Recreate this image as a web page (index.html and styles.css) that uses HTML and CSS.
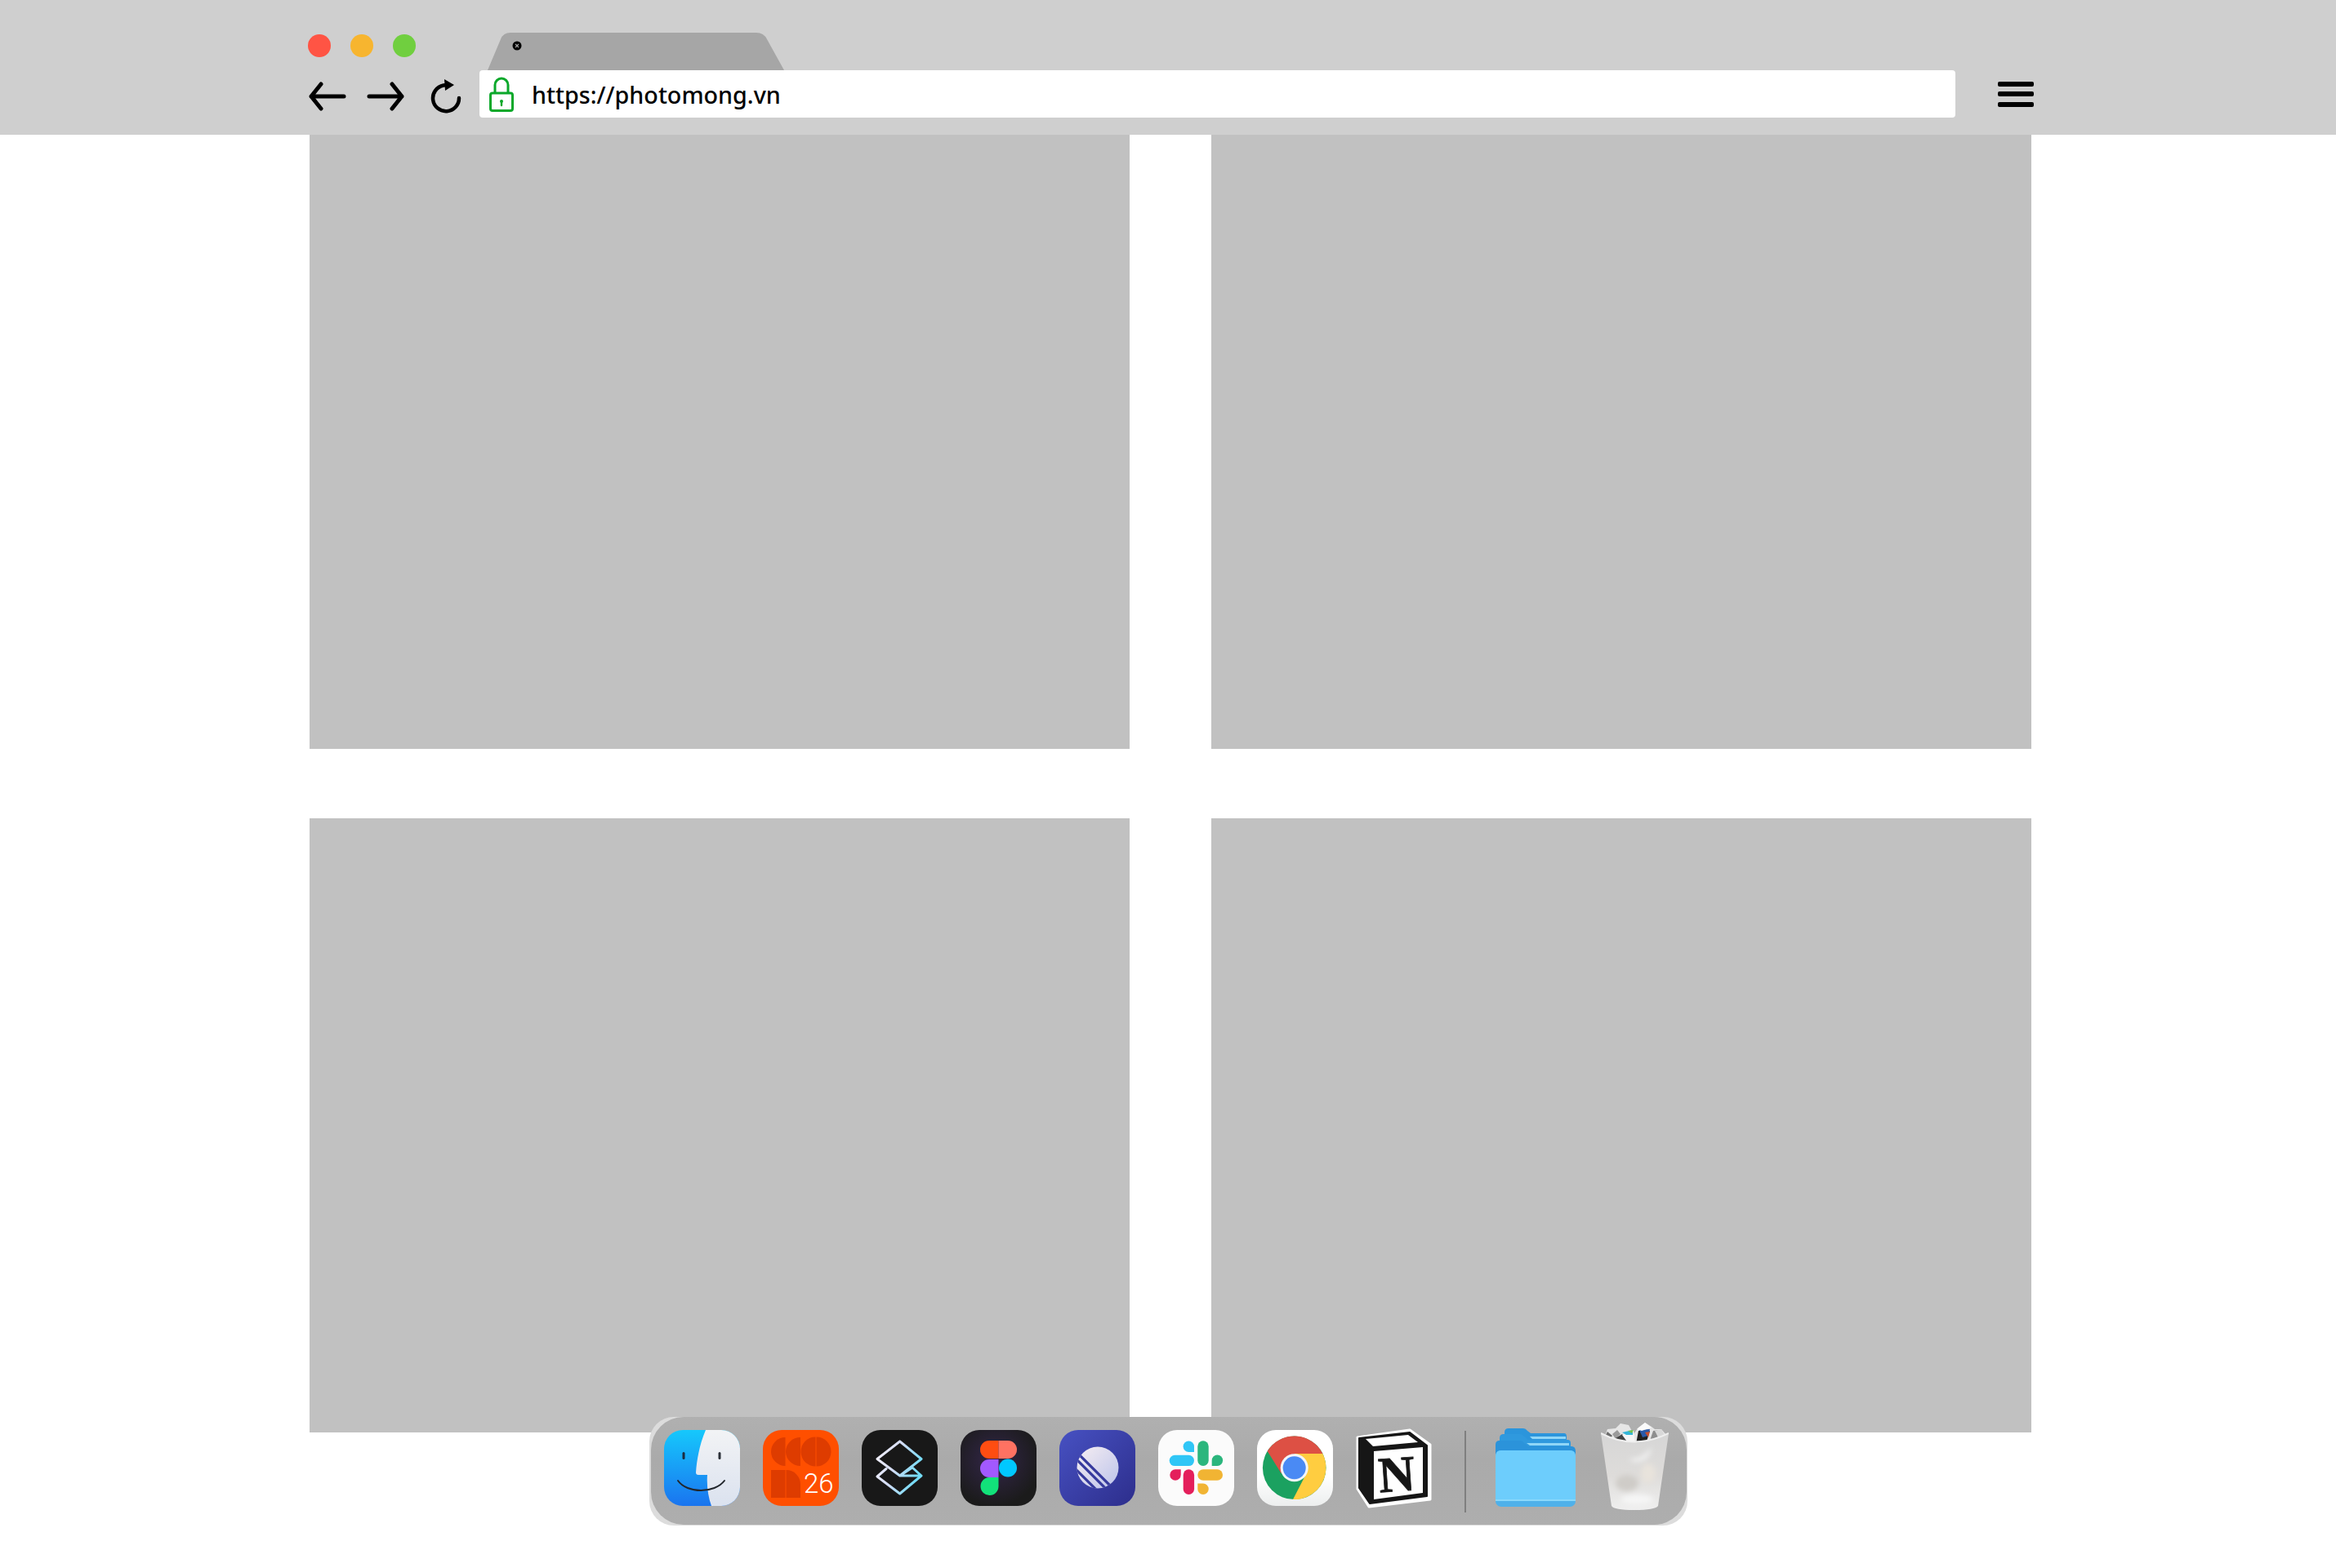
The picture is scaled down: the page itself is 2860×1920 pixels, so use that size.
FILE: index.html
```html
<!DOCTYPE html>
<html lang="en">
<head>
    <meta charset="UTF-8">
    <meta name="viewport" content="width=device-width, initial-scale=1.0">
    <title>photomong.vn</title>
    <link rel="stylesheet" href="styles.css">
</head>
<body>
    <header class="browser">
        <div class="tabs">
            <div class="lights">
                <span class="light red"></span>
                <span class="light yellow"></span>
                <span class="light green"></span>
            </div>
            <svg class="tab" width="363" height="46" viewBox="0 0 363 46">
                <path d="M0 46 L16 8 Q19 0 28 0 H329 Q338 0 342 8 L363 46 Z" fill="#a6a6a6"/>
                <circle cx="36" cy="16" r="5.5" fill="#000"/>
                <path d="M34 14 L38 18 M38 14 L34 18" stroke="#a6a6a6" stroke-width="1.2"/>
            </svg>
        </div>
        <div class="nav">
            <svg class="back" width="46" height="36" viewBox="0 0 46 36">
                <path d="M43 18 H3 M15 3 L3 18 L15 33" fill="none" stroke="#000" stroke-width="5" stroke-linecap="round" stroke-linejoin="round"/>
            </svg>
            <svg class="forward" width="46" height="36" viewBox="0 0 46 36">
                <path d="M3 18 H43 M31 3 L43 18 L31 33" fill="none" stroke="#000" stroke-width="5" stroke-linecap="round" stroke-linejoin="round"/>
            </svg>
            <svg class="reload" width="38" height="42" viewBox="0 0 38 42">
                <path d="M35 23 A16 16 0 1 1 16 7.5 L20 7" fill="none" stroke="#000" stroke-width="4.5" stroke-linecap="round"/>
                <path d="M17 0 L29 7 L18 14 Z" fill="#000"/>
            </svg>
            <div class="address">
                <svg class="lock" width="30" height="43" viewBox="0 0 30 43">
                    <path d="M7 20 V10 A8 8 0 0 1 23 10 V20" fill="none" stroke="#0aa82a" stroke-width="3"/>
                    <rect x="1.5" y="20" width="27" height="21.5" rx="2.5" fill="none" stroke="#0aa82a" stroke-width="3"/>
                    <circle cx="15" cy="30" r="2" fill="#0aa82a"/>
                    <path d="M15 30 V35" stroke="#0aa82a" stroke-width="2.4" stroke-linecap="round"/>
                </svg>
                <span class="url">https://photomong.vn</span>
            </div>
            <div class="menu"><span></span><span></span><span></span></div>
        </div>
    </header>

    <main class="grid">
        <div class="tile"></div>
        <div class="tile"></div>
        <div class="tile"></div>
        <div class="tile"></div>
    </main>

    <nav class="dock">
        <!-- finder -->
        <svg class="app" width="93" height="93" viewBox="0 0 93 93">
            <defs>
                <linearGradient id="fb" x1="0" y1="0" x2="0" y2="1"><stop offset="0" stop-color="#16c8fc"/><stop offset="1" stop-color="#1a74ef"/></linearGradient>
                <linearGradient id="fw" x1="0" y1="0" x2="0" y2="1"><stop offset="0" stop-color="#f2f3f5"/><stop offset="1" stop-color="#dbe2ef"/></linearGradient>
                <clipPath id="rr"><rect width="93" height="93" rx="23"/></clipPath>
            </defs>
            <g clip-path="url(#rr)">
                <rect width="93" height="93" fill="url(#fb)"/>
                <path d="M51 0 C44 16 40 36 39 52 Q39 55 42 55 H53 C52 68 54 82 58 93 H93 V0 Z" fill="url(#fw)"/>
            </g>
            <rect x="22.5" y="27" width="3" height="9" rx="1.5" fill="#1d2b3f"/>
            <rect x="66.5" y="27" width="3" height="9" rx="1.5" fill="#2b3038"/>
            <path d="M17 62 C28 78 62 78 74 62" fill="none" stroke="#22262c" stroke-width="2" stroke-linecap="round"/>
        </svg>
        <!-- con 26 -->
        <svg class="app" width="93" height="93" viewBox="0 0 93 93">
            <rect width="93" height="93" rx="23" fill="#ff4f00"/>
            <g fill="#de3c00">
                <path d="M27.5 9 V44 A17.5 17.5 0 0 1 27.5 9 Z"/>
                <path d="M46 9 V44 A18 17.5 0 0 1 46 9 Z"/>
                <path d="M64.5 8.5 V44.5 A18 18 0 0 1 64.5 8.5 Z"/>
                <path d="M65.5 8.5 A18 18 0 0 1 65.5 44.5 Z"/>
                <rect x="10" y="49" width="17.5" height="34"/>
                <path d="M28.5 49 A17.5 17.5 0 0 1 46 66.5 V83 H28.5 Z"/>
            </g>
            <text class="num" x="50" y="77">26</text>
        </svg>
        <!-- layers -->
        <svg class="app" width="93" height="93" viewBox="0 0 93 93">
            <defs>
                <linearGradient id="lg" x1="0" y1="0" x2="1" y2="0.4"><stop offset="0" stop-color="#f7f3fb"/><stop offset="0.5" stop-color="#d3dcf5"/><stop offset="1" stop-color="#74dcf7"/></linearGradient>
            </defs>
            <rect width="93" height="93" rx="23" fill="#181818"/>
            <path d="M46.7 14 L73 35.5 L46.7 56 H73 L46.7 78 L19 57 L30 47.5 M46.7 56 L19 35.5 L46.7 14 M46.7 56 L62 46 L73 56" fill="none" stroke="url(#lg)" stroke-width="3" stroke-linejoin="round" stroke-linecap="round"/>
        </svg>
        <!-- figma -->
        <svg class="app" width="93" height="93" viewBox="0 0 93 93">
            <defs>
                <radialGradient id="fg" cx="0.45" cy="0.4" r="0.6"><stop offset="0" stop-color="#33264a"/><stop offset="1" stop-color="#1b1b1b"/></radialGradient>
            </defs>
            <rect width="93" height="93" rx="23" fill="url(#fg)"/>
            <path d="M46.5 13 H35 A11 11 0 0 0 35 35 H46.5 Z" fill="#ff4d12"/>
            <path d="M46.5 13 H58 A11 11 0 0 1 58 35 H46.5 Z" fill="#ff7262"/>
            <path d="M46.5 36 H35 A11 11 0 0 0 35 58 H46.5 Z" fill="#a259ff"/>
            <circle cx="58" cy="46.5" r="11" fill="#00c8ff"/>
            <path d="M46.5 58 H35 A11 11 0 1 0 46.5 69 Z" fill="#12e27a"/>
        </svg>
        <!-- linear -->
        <svg class="app" width="93" height="93" viewBox="0 0 93 93">
            <defs>
                <linearGradient id="lb" x1="0" y1="0" x2="1" y2="1"><stop offset="0" stop-color="#4751c2"/><stop offset="1" stop-color="#2d2e8c"/></linearGradient>
                <linearGradient id="lc" x1="0" y1="0" x2="1" y2="1"><stop offset="0" stop-color="#f6eef2"/><stop offset="1" stop-color="#bcc3ea"/></linearGradient>
                <clipPath id="lcp"><circle cx="47" cy="46" r="25.5"/></clipPath>
            </defs>
            <rect width="93" height="93" rx="23" fill="url(#lb)"/>
            <circle cx="47" cy="46" r="25.5" fill="url(#lc)"/>
            <g clip-path="url(#lcp)" stroke="#363a9d" stroke-width="3.2">
                <path d="M20 26 L66 72 M17 32 L60 75 M14 42 L50 78"/>
            </g>
        </svg>
        <!-- slack -->
        <svg class="app" width="93" height="93" viewBox="0 0 93 93">
            <rect width="93" height="93" rx="23" fill="#fbfbfb"/>
            <g fill="#30c6f6">
                <path d="M44 27 H37.3 A6.7 6.7 0 1 1 44 20.3 Z"/>
                <rect x="13.7" y="30.7" width="30.3" height="13.4" rx="6.7"/>
            </g>
            <g fill="#2bb67d">
                <rect x="48.3" y="13.3" width="13.4" height="30.7" rx="6.7"/>
                <path d="M65.7 44 V37.3 A6.7 6.7 0 1 1 72.4 44 Z"/>
            </g>
            <g fill="#e41f5b">
                <path d="M27.7 48.3 V55 A6.7 6.7 0 1 1 21 48.3 Z"/>
                <rect x="30.7" y="48.3" width="13.4" height="30.7" rx="6.7"/>
            </g>
            <g fill="#f1b433">
                <rect x="48.3" y="48.3" width="30.7" height="13.4" rx="6.7"/>
                <path d="M48.3 65.5 H55 A6.7 6.7 0 1 1 48.3 72.2 Z"/>
            </g>
        </svg>
        <!-- chrome -->
        <svg class="app" width="93" height="93" viewBox="0 0 93 93">
            <defs>
                <linearGradient id="cw" x1="0" y1="0" x2="0" y2="1"><stop offset="0.6" stop-color="#fff"/><stop offset="1" stop-color="#eceeee"/></linearGradient>
            </defs>
            <rect width="93" height="93" rx="23" fill="url(#cw)"/>
            <circle cx="45.7" cy="46.3" r="38.8" fill="#1ba160"/>
            <path d="M80.4 29 A38.8 38.8 0 0 1 44 85 L60 54 L45.7 29 Z" fill="#ffcd40"/>
            <path d="M12.7 25.9 A38.8 38.8 0 0 1 80.4 29 H45.7 L29.5 53 Z" fill="#dd5044"/>
            <circle cx="45.7" cy="46.3" r="17" fill="#f3f6fb"/>
            <circle cx="45.7" cy="46.3" r="14" fill="#4a8af4"/>
        </svg>
        <!-- notion -->
        <svg class="app notion" width="93" height="93" viewBox="0 0 93 93">
            <path d="M2 9 L66 0 L91 18 V85 L16 94 L2 72 Z" fill="#fff" stroke="#fff" stroke-width="3" stroke-linejoin="round"/>
            <path d="M4 10 L66 3 L87 19 V81 L17 90 L4 71 Z" fill="#161616" stroke="#161616" stroke-width="2" stroke-linejoin="round"/>
            <path d="M12 11 L64 6 L76 15 L21 20 Z" fill="#fff"/>
            <path d="M22 26 L82 21 V77 L22 85 Z" fill="#fff"/>
            <text class="notion-n" x="0" y="0" transform="translate(29 76.5) rotate(-4)">N</text>
        </svg>
        <span class="sep"></span>
        <!-- folder -->
        <svg class="folder" width="99" height="97" viewBox="0 0 99 97">
            <path d="M11 22 V5 Q11 0 16 0 H34 Q37 0 39 3 L43 6 H84 Q87 6 87 10 V22 Z" fill="#2b95dc"/>
            <path d="M42 10 H86 V13 H45 Z" fill="#8fd6f7"/>
            <path d="M5 26 V12 Q5 7 10 7 H30 Q33 7 35 10 L40 14 H88 Q92 14 92 18 V26 Z" fill="#2f99de"/>
            <path d="M38 18 H90 V21 H42 Z" fill="#8fd6f7"/>
            <path d="M0 32 V20 Q0 15 5 15 H30 Q33 15 35 18 L40 22 H93 Q98 22 98 28 V32 Z" fill="#2b93da"/>
            <rect y="27" width="98" height="69" rx="7" fill="#4fb1ea"/>
            <path d="M0 34 Q0 27 7 27 H91 Q98 27 98 34 V88 H0 Z" fill="#6dcdfc"/>
            <rect y="87" width="98" height="2" fill="#8ad8fb"/>
        </svg>
        <!-- trash -->
        <svg class="trash" width="83" height="107" viewBox="0 0 83 107">
            <defs>
                <linearGradient id="tb" x1="0" y1="0" x2="0" y2="1"><stop offset="0" stop-color="#d6d6d6"/><stop offset="0.55" stop-color="#dedcda"/><stop offset="1" stop-color="#efefef"/></linearGradient>
                <filter id="soft"><feGaussianBlur stdDeviation="3"/></filter>
            </defs>
            <path d="M5 16 L8 8 L18 7 L24 1 L34 3 L40 14 L46 6 L54 0 L62 5 L66 8 L74 8 L80 15 L62 28 L20 28 Z" fill="#e6e6e6"/>
            <path d="M8 11 L14 16 L10 22 L5 17 Z" fill="#6b6b6b"/>
            <path d="M14 14 L20 9 L24 14 L18 20 Z" fill="#9a9a9a"/>
            <path d="M18 19 L26 14 L34 24 L22 26 Z" fill="#444"/>
            <path d="M26 15 L40 9 L42 26 L34 26 Z" fill="#f5f5f5"/>
            <path d="M26 12 L39 9 L39 15 L31 15 Z" fill="#35b6d8"/>
            <path d="M33 10 L40 9 L38 13 Z" fill="#7bc34a"/>
            <path d="M43 26 L46 10 L60 10 L55 26 Z" fill="#222"/>
            <path d="M47 9 L60 8 L58 16 L51 18 Z" fill="#2b5aa8"/>
            <path d="M54 12 L60 11 L58 18 Z" fill="#c8502e"/>
            <path d="M44 8 L54 0 L62 6 L50 10 Z" fill="#fafafa"/>
            <path d="M60 22 L64 10 L72 9 L73 22 Z" fill="#8e8e8e"/>
            <path d="M66 10 L74 8 L78 16 L70 18 Z" fill="#d8d8d8"/>
            <path d="M0 13 Q40 34 83 13 L70 102 Q66 107 41 107 Q16 107 13 102 Z" fill="url(#tb)"/>
            <g filter="url(#soft)">
                <path d="M34 44 Q50 46 62 30 Q60 48 40 48 Z" fill="#f2f2f2"/>
                <ellipse cx="32" cy="74" rx="14" ry="10" fill="#cfccc8"/>
                <ellipse cx="58" cy="62" rx="9" ry="12" fill="#e8e3dc"/>
                <ellipse cx="44" cy="94" rx="20" ry="6" fill="#f6f6f6"/>
            </g>
            <path d="M0 13 Q40 34 83 13" fill="none" stroke="#efefef" stroke-width="2"/>
        </svg>
    </nav>
</body>
</html>
```

FILE: styles.css
```css
* { box-sizing: border-box; }

body {
    margin: 0;
    height: 1920px;
    position: relative;
    background: #fff;
    overflow: hidden;
    font-family: "Noto Sans", sans-serif;
}

/* browser chrome */
.browser {
    height: 165px;
    padding: 40px 0 0 377px;
    background: #cfcfcf;
}
.tabs {
    display: flex;
    height: 46px;
}
.lights {
    display: flex;
    gap: 24px;
    margin-top: 2px;
    margin-right: 88px;
}
.light {
    width: 28px;
    height: 28px;
    border-radius: 50%;
}
.light.red { background: #ff5444; }
.light.yellow { background: #f7b52f; }
.light.green { background: #70cf3f; }
.tab { display: block; }

.nav {
    display: flex;
    align-items: center;
    height: 58px;
}
.nav svg { display: block; flex: none; }
.back { margin: 5px 0 0 1px; }
.forward { margin: 5px 0 0 25px; }
.reload { margin: 5px 0 0 32px; }

.address {
    display: flex;
    align-items: center;
    gap: 22px;
    width: 1807px;
    height: 58px;
    margin-left: 22px;
    padding-left: 12px;
    background: #fff;
    border-radius: 4px;
}
.url {
    font-size: 28.7px;
    font-weight: 500;
    color: #000;
}

.menu {
    display: flex;
    flex-direction: column;
    gap: 6.5px;
    width: 44px;
    margin-left: 52px;
}
.menu span {
    height: 6px;
    background: #000;
    border-radius: 2px;
}

/* tiles */
.grid {
    display: grid;
    grid-template-columns: 1004px 1004px;
    grid-auto-rows: 752px;
    column-gap: 100px;
    row-gap: 85px;
    margin-left: 379px;
}
.tile { background: #c1c1c1; }

/* dock */
.dock {
    position: absolute;
    left: 795px;
    top: 1735px;
    z-index: 1;
    display: flex;
    align-items: center;
    width: 1271px;
    height: 133px;
    padding: 0 0 8px 18px;
    background: #dcdcdc;
    border-radius: 30px;
}
.dock::before {
    content: "";
    position: absolute;
    inset: 0 1px 1px 2px;
    z-index: -1;
    background: linear-gradient(#b0b0b0, #aaaaaa 40%, #aeaeae 100%);
    border-radius: 40px;
}
.app {
    display: block;
    flex: none;
    margin-right: 28px;
    overflow: visible;
}
.num {
    font-family: "Roboto", sans-serif;
    font-weight: 300;
    font-size: 33px;
    fill: #fff;
}
.notion-n {
    font-family: "Liberation Serif", serif;
    font-weight: 700;
    font-size: 62px;
    fill: #161616;
    stroke: #161616;
    stroke-width: 0.8px;
}
.notion { margin-right: 0; }
.sep {
    flex: none;
    width: 2px;
    height: 100px;
    margin: 8px 0 0 40px;
    background: #7f7f7f;
}
.folder {
    display: block;
    flex: none;
    margin-left: 36px;
}
.trash {
    display: block;
    flex: none;
    margin: 0 0 4px 30px;
}
```
